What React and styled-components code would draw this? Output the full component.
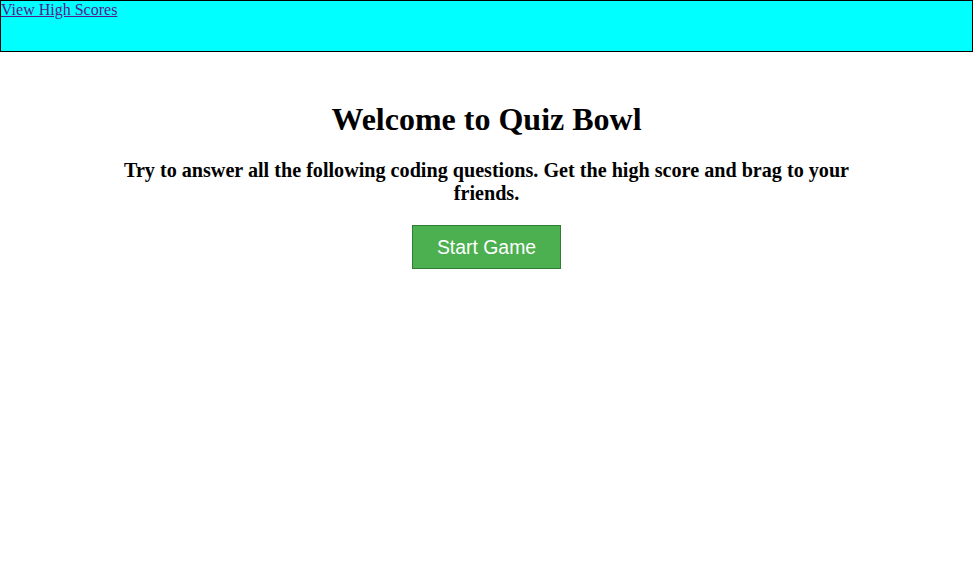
import React from 'react';
import styled, { createGlobalStyle } from 'styled-components';

const GlobalStyle = createGlobalStyle`
	body {
		margin: 0;
		font-family: 'Liberation Serif', 'Times New Roman', serif;
		background: #fff;
		color: #000;
	}
`;

const Header = styled.header`
	box-sizing: border-box;
	height: 52px;
	background-color: #00ffff;
	border: 1px solid #000;
`;

const ScoresLink = styled.a`
	font-size: 16px;
	color: #551a8b;
	text-decoration: underline;
	cursor: pointer;
`;

const Main = styled.main`
	width: 740px;
	margin: 0 auto;
	padding-top: 28px;
	display: flex;
	flex-direction: column;
	align-items: center;
	text-align: center;
`;

const Title = styled.h1`
	font-size: 32px;
	font-weight: bold;
	margin: 21px 0;
`;

const Intro = styled.h2`
	font-size: 20.15px;
	line-height: 23px;
	font-weight: bold;
	margin: 0 0 20px;
`;

const StartButton = styled.button`
	box-sizing: border-box;
	width: 149px;
	height: 44px;
	background-color: #4caf50;
	border: 1px solid #2e7d32;
	color: #fff;
	font-family: 'Liberation Sans', Arial, sans-serif;
	font-size: 19.4px;
	cursor: pointer;
`;

const App = () => {
	return (
		<>
			<GlobalStyle />
			<Header>
				<ScoresLink href='#'>View High Scores</ScoresLink>
			</Header>
			<Main>
				<Title>Welcome to Quiz Bowl</Title>
				<Intro>
					Try to answer all the following coding questions. Get the high score and brag to your friends.
				</Intro>
				<StartButton>Start Game</StartButton>
			</Main>
		</>
	);
};

export default App;
